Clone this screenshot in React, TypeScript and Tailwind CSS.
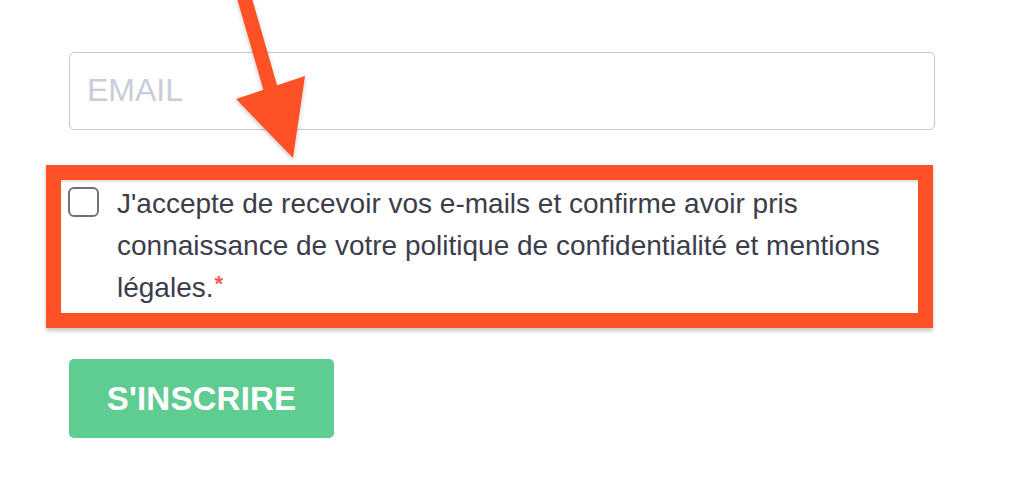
import React from "react";

export default function App() {
  return (
    <div
      className="relative w-full h-[498px] overflow-hidden bg-white"
      style={{ fontFamily: '"Liberation Sans", Arial, Helvetica, sans-serif' }}
    >
      <div className="flex flex-col items-start pl-[69px] pt-[52px]">
        <div className="w-[866px] h-[78px] border-[1.5px] border-[#c3c8d4] rounded-[5px] flex items-center pl-[17px] pb-[2px]">
          <span className="text-[32px] leading-none text-[#c9cdd9]">EMAIL</span>
        </div>

        <div className="mt-[35px] -ml-[23px] w-[887px] h-[163px] border-[15px] border-[#ff5126] bg-white shadow-[0_3px_4px_rgba(0,0,0,0.22),inset_0_2px_2px_rgba(0,0,0,0.12)] flex items-start pl-[7px] pt-[3px]">
          <div className="mt-[4px] w-[31px] h-[30px] shrink-0 rounded-[6px] border-2 border-[#707078] bg-white" />
          <p className="ml-[18px] w-[790px] text-[28px] leading-[42px] text-[#3c3d4b]">
            J'accepte de recevoir vos e-mails et confirme avoir pris connaissance de votre politique de confidentialité et mentions légales.
            <span className="inline-block align-top mt-[6px] ml-[1px] text-[#f25c4f] font-bold text-[22px] leading-none">*</span>
          </p>
        </div>

        <button className="mt-[31px] w-[265px] h-[79px] rounded-[5px] bg-[#5fcd92] flex items-center justify-center text-white font-bold text-[33px] leading-none tracking-[0.2px]">
          S'INSCRIRE
        </button>
      </div>

      <svg
        className="absolute left-0 top-0 pointer-events-none"
        width="1014"
        height="498"
        viewBox="0 0 1014 498"
      >
        <defs>
          <filter id="sh" x="-20%" y="-20%" width="140%" height="140%">
            <feDropShadow dx="0" dy="2" stdDeviation="2" floodColor="#000" floodOpacity="0.22" />
          </filter>
        </defs>
        <g filter="url(#sh)" fill="#ff5126">
          <polygon points="236,-5 251,-5 279,92 264,92" />
          <polygon points="236,99 305,76 293,158" />
        </g>
      </svg>
    </div>
  );
}
